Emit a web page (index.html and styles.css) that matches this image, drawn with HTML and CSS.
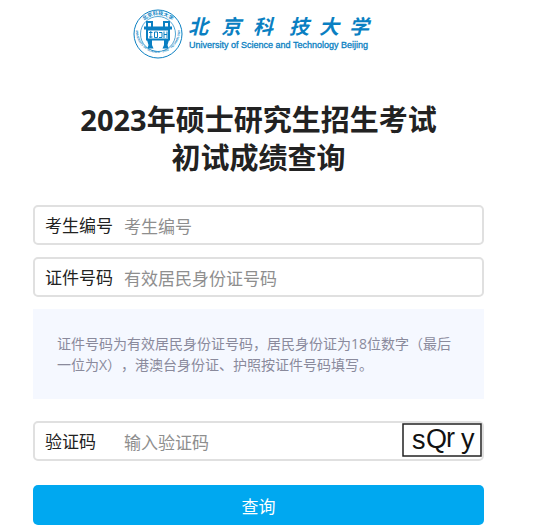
FILE: index.html
```html
<!DOCTYPE html>
<html lang="zh-CN">
<head>
    <meta charset="UTF-8">
    <meta name="viewport" content="width=device-width, initial-scale=1.0">
    <title>初试成绩查询</title>
    <link rel="stylesheet" href="styles.css">
</head>
<body>
<div class="container">
    <div class="logo">
        <svg class="seal" viewBox="0 0 50 50" width="50" height="50">
            <defs>
                <path id="ring-top" d="M6 25 A19 19 0 0 1 44 25"/>
                <path id="ring-bottom" d="M3 22 A22 22 0 1 0 47 22"/>
            </defs>
            <circle cx="25" cy="25" r="24" class="line"/>
            <circle cx="25" cy="25" r="17.500" class="line thin"/>
            <text class="ring-cn"><textPath href="#ring-top" startOffset="50%" text-anchor="middle">北京科技大学</textPath></text>
            <text class="ring-en"><textPath href="#ring-bottom" startOffset="50%" text-anchor="middle">UNIVERSITY OF SCIENCE · 1952 · TECHNOLOGY</textPath></text>
            <!-- bronze ding -->
            <path class="line handle" d="M14 19 V13 H19 V18 M31 18 V13 H36 V19"/>
            <path class="fill" d="M11 17.500 H39 V20.500 H37 V31.500 H13 V20.500 H11 Z"/>
            <path class="cut" d="M15 21.500 H35 V29.500 H15 Z"/>
            <path class="line" d="M16 23.500 H19.500 M16 28 H19.500 M17.800 22 V29 M21.500 23 V28.500 H24.500 V23 Z M26 23.500 H29 V28.500 H26 M31 22.500 V29 M31 25.500 H34 M34 22.500 V29"/>
            <path class="fill" d="M14 31 H19 V36 L20.500 39.500 H14.500 L15.500 36 Z M31 31 H36 L34.500 36 L35.500 39.500 H29.500 L31 36 Z"/>
        </svg>
        <svg class="wordmark" viewBox="0 0 184 46" width="184" height="46">
            <text class="name-cn" x="-1 32 64 100 130 160" y="25">北京科技大学</text>
            <text class="name-en" x="0" y="39">University of Science and Technology Beijing</text>
        </svg>
    </div>

    <h1>2023年硕士研究生招生考试<br>初试成绩查询</h1>

    <form>
        <div class="field">
            <label for="ksbh">考生编号</label>
            <input type="text" id="ksbh" placeholder="考生编号">
        </div>
        <div class="field">
            <label for="zjhm">证件号码</label>
            <input type="text" id="zjhm" placeholder="有效居民身份证号码">
        </div>
        <p class="note">证件号码为有效居民身份证号码，居民身份证为18位数字（最后一位为X），港澳台身份证、护照按证件号码填写。</p>
        <div class="field">
            <label for="yzm">验证码</label>
            <input type="text" id="yzm" placeholder="输入验证码">
            <svg class="captcha" viewBox="0 0 80 36" width="80" height="36">
                <rect x="1" y="1" width="78" height="32"/>
                <text x="10 24 44 59" y="26 25 24 25">sQry</text>
            </svg>
        </div>
        <button type="submit">查询</button>
    </form>
</div>
</body>
</html>
```

FILE: styles.css
```css
* {
    box-sizing: border-box;
}
body{
    margin: 0;
    background: #fff;
    color: #222;
    font-family: "Open Sans", "Noto Sans CJK SC", sans-serif;
}
.container{
    padding: 9px 50px 5px 33px;
}
.logo{
    display: flex;
    justify-content: center;
    gap: 6px;
    padding-right: 12px;
}
.logo svg{
    overflow: visible;
}
.line{
    fill: none;
    stroke: #0a7fc2;
    stroke-width: 1;
}
.thin{
    stroke-width: 0.7;
}
.handle{
    stroke-width: 2;
}
.fill, .ring-cn, .ring-en, .name-cn, .name-en{
    fill: #0a7fc2;
}
.cut{
    fill: #fff;
}
.ring-cn{
    font-size: 5px;
    font-weight: bold;
}
.ring-en{
    font-family: "Liberation Sans", sans-serif;
    font-size: 3px;
    font-weight: bold;
}
.name-cn{
    font-family: "Noto Sans CJK SC", sans-serif;
    font-size: 20px;
    font-style: italic;
    font-weight: bold;
}
.name-en{
    font-family: "Liberation Sans", sans-serif;
    font-size: 9px;
    stroke: #0a7fc2;
    stroke-width: 0.3;
}
h1{
    margin: 42px 0 28px;
    font-size: 29px;
    line-height: 38px;
    text-align: center;
}
form{
    display: flex;
    flex-direction: column;
    gap: 12px;
}
.field{
    display: flex;
    height: 40px;
    border: 2px solid #e0e0e0;
    border-radius: 5px;
    padding-left: 10px;
}
.field label{
    width: 79px;
    font-size: 17px;
    line-height: 38px;
}
.field input{
    flex: 1;
    min-width: 0;
    border: none;
    outline: none;
    padding: 2px 0 0;
    background: none;
    font-family: inherit;
    font-size: 17px;
}
.field input::placeholder{
    color: #8e8e8e;
}
.note{
    margin: 0 0 10px;
    padding: 24px;
    background: #f5f8ff;
    color: #8a8a9c;
    font-size: 14px;
    line-height: 21px;
    text-spacing-trim: space-all;
}
.captcha rect{
    fill: #fff;
    stroke: #222;
    stroke-width: 1.5;
}
.captcha text{
    fill: #111;
    font-family: "Liberation Sans", sans-serif;
    font-size: 27px;
}
button{
    height: 40px;
    margin-top: 12px;
    border: none;
    border-radius: 5px;
    background: #00a8f0;
    color: #fff;
    font-family: inherit;
    font-size: 17px;
}
```
